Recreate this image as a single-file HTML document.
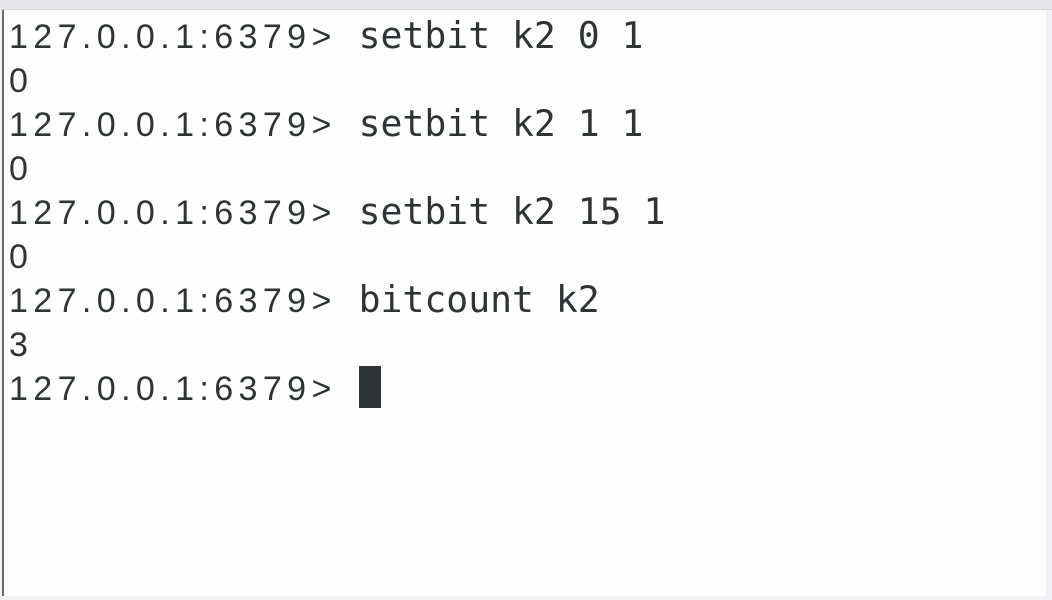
<!DOCTYPE html>
<html><head><meta charset="utf-8"><style>
html,body{margin:0;padding:0;}
body{width:1052px;height:600px;background:#f1f1f5;position:relative;overflow:hidden;}
.top{position:absolute;left:0;top:0;width:1052px;height:9px;background:#e8e8ea;border-bottom:1px solid #d4d4d6;}
.term{position:absolute;left:2px;top:10px;width:1042px;height:586px;background:#fefefe;border-left:2px solid #6a6a6a;}
.l{position:absolute;left:5px;height:44px;line-height:44px;white-space:pre;color:#2e3436;font-family:"DejaVu Sans Mono",monospace;font-size:36.4px;}
.p{font-family:"Liberation Sans",sans-serif;font-size:34px;letter-spacing:5.4px;}
.cur{display:inline-block;width:22px;height:42px;background:#2e3436;vertical-align:-8px;}
</style></head><body>
<div class="top"></div>
<div class="term">
<div class="l" style="top:4px"><span class="p">127.0.0.1:6379&gt;</span> setbit k2 0 1</div>
<div class="l" style="top:48px"><span class="p">0</span></div>
<div class="l" style="top:92px"><span class="p">127.0.0.1:6379&gt;</span> setbit k2 1 1</div>
<div class="l" style="top:136px"><span class="p">0</span></div>
<div class="l" style="top:180px"><span class="p">127.0.0.1:6379&gt;</span> setbit k2 15 1</div>
<div class="l" style="top:224px"><span class="p">0</span></div>
<div class="l" style="top:268px"><span class="p">127.0.0.1:6379&gt;</span> bitcount k2</div>
<div class="l" style="top:312px"><span class="p">3</span></div>
<div class="l" style="top:356px"><span class="p">127.0.0.1:6379&gt;</span> <span class="cur"></span></div>
</div>
</body></html>
